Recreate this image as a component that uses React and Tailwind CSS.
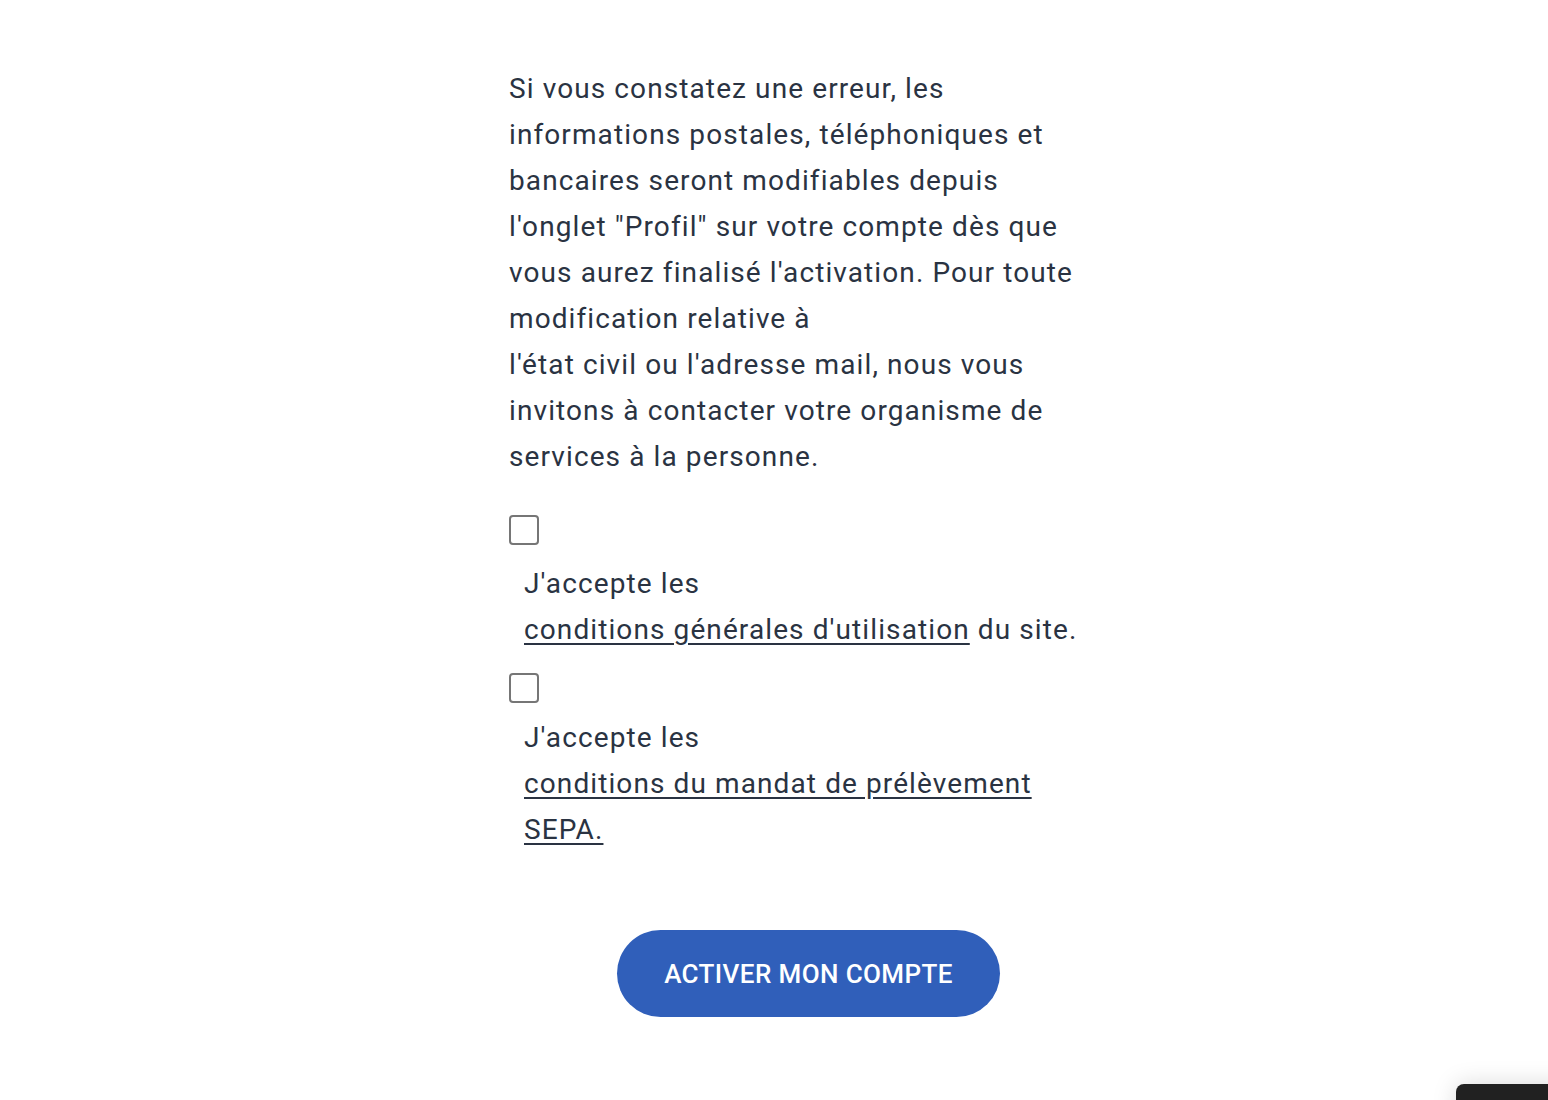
const font = { fontFamily: "Roboto, 'Liberation Sans', sans-serif" };

function Consent({ children, className = "", gap = "mt-[16px]" }) {
  return (
    <div className={className}>
      <input
        type="checkbox"
        className="block w-[30px] h-[30px] appearance-none rounded-[4px] border-2 border-[#767676] bg-white"
      />
      <label className={`block pl-[15px] ${gap}`}>{children}</label>
    </div>
  );
}

export default function App() {
  return (
    <div
      className="relative min-h-[1100px] bg-white text-[#2a3342] overflow-hidden"
      style={font}
    >
      <div className="flex justify-center pl-[46px] pt-[66px]">
        <div className="w-[576px] text-[28px] leading-[46px] tracking-[1.1px] flex flex-col">
          <p>
            Si vous constatez une erreur, les informations postales,
            téléphoniques et bancaires seront modifiables depuis l'onglet
            "Profil" sur votre compte dès que vous aurez finalisé
            l'activation. Pour toute modification relative à
            <br />
            l'état civil ou l'adresse mail, nous vous invitons à contacter
            votre organisme de services à la personne.
          </p>

          <Consent className="mt-[35px]">
            J'accepte les
            <br />
            <a href="#" className="underline underline-offset-[4px]">
              conditions générales d'utilisation
            </a>{" "}
            du site.
          </Consent>

          <Consent className="mt-[20px]" gap="mt-[12px]">
            J'accepte les
            <br />
            <a href="#" className="underline underline-offset-[4px]">
              conditions du mandat de prélèvement SEPA.
            </a>
          </Consent>

          <button className="self-start ml-[108px] mt-[77px] w-[383px] h-[87px] rounded-full bg-[#305fba] text-white text-[26px] font-medium tracking-[0.4px]">
            ACTIVER MON COMPTE
          </button>
        </div>
      </div>

      <div className="absolute left-[1456px] top-[1084px] w-[120px] h-[60px] rounded-lg bg-[#212121] shadow-[0_0_24px_rgba(0,0,0,0.15)]" />
    </div>
  );
}
